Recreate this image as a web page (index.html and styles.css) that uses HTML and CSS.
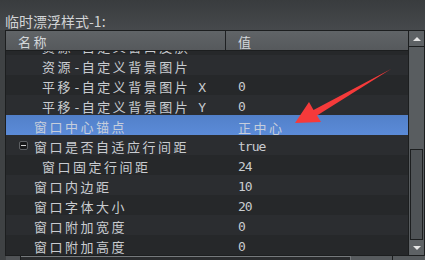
FILE: index.html
```html
<!DOCTYPE html>
<html lang="zh">
<head>
<meta charset="UTF-8" />
<title>临时漂浮样式</title>
<link rel="stylesheet" href="styles.css">
</head>
<body>
  <div class="title">临时漂浮样式-1:</div>

  <div class="panel">
    <div class="grid">
      <div class="head">
        <div class="hname">名称</div>
        <div class="hval">值</div>
      </div>
      <div class="rows">
        <div class="row dark cut"><div class="name child">资源<span class="dash">-</span>自定义窗口皮肤</div><div class="val">skin01</div></div>
        <div class="row"><div class="name child">资源<span class="dash">-</span>自定义背景图片</div><div class="val"></div></div>
        <div class="row dark"><div class="name child">平移<span class="dash">-</span>自定义背景图片<span class="axis"> X</span></div><div class="val">0</div></div>
        <div class="row"><div class="name child">平移<span class="dash">-</span>自定义背景图片<span class="axis"> Y</span></div><div class="val">0</div></div>
        <div class="row sel"><div class="name">窗口中心锚点</div><div class="val"><span class="cjk">正中心</span></div></div>
        <div class="row"><div class="name tree"><span class="toggle"></span>窗口是否自适应行间距</div><div class="val">true</div></div>
        <div class="row dark"><div class="name child">窗口固定行间距</div><div class="val">24</div></div>
        <div class="row"><div class="name">窗口内边距</div><div class="val">10</div></div>
        <div class="row dark"><div class="name">窗口字体大小</div><div class="val">20</div></div>
        <div class="row"><div class="name">窗口附加宽度</div><div class="val">0</div></div>
        <div class="row dark"><div class="name">窗口附加高度</div><div class="val">0</div></div>
      </div>
    </div>
    <div class="vscroll">
      <div class="sbtn up"></div>
      <div class="track"><div class="thumb"></div></div>
      <div class="sbtn down"></div>
    </div>
  </div>

  <div class="foot">
    <span class="f1"></span><span class="f2"></span><span class="f3"></span><span class="f4"></span><span class="f5"></span><span class="f6"></span>
  </div>

  <!-- red pointer drawn over the list -->
  <svg class="arrow" width="425" height="260" viewBox="0 0 425 260">
    <polygon points="295,123 309,102 313.5,110 391,69 317,115.5 321,122" fill="#f53a3a"/>
  </svg>
</body>
</html>
```

FILE: styles.css
```css
* { box-sizing: border-box; margin: 0; padding: 0; }
body {
  width: 425px; height: 260px; overflow: hidden; position: relative;
  background: #3f4244;
  font-family: "DejaVu Sans Mono", "Noto Sans CJK SC", monospace;
  color: #c9ccd0;
}

/* Title */
.title {
  height: 30px; padding: 13px 0 0 5px;
  font: 14px/16px "Noto Sans CJK SC", sans-serif;
  color: #d2d4d6;
  background: linear-gradient(#393c3e, #46494c);
}

/* Property grid */
.panel { display: flex; margin-left: 5px; }
.grid { width: 404px; border: 1px solid #1c1e1f; }

.head {
  display: flex; height: 20px;
  border-bottom: 1px solid #1c1e1f;
  background: linear-gradient(#606467, #56595c);
  color: #d4d7da;
  font-size: 13px; line-height: 14px; letter-spacing: 2.5px;
}
.hname { width: 220px; padding: 5px 0 0 12px; border-right: 1px solid #1e2022; }
.hval { flex: 1; padding: 5px 0 0 12px; }

.rows { height: 204px; overflow: hidden; }
.row { display: flex; height: 20px; background: #2b2d30; white-space: nowrap; }
.row.dark { background: #26282a; }
.row.cut { margin-top: -16px; }
.row.sel { background: linear-gradient(#5280c9, #5b8bd8); color: #c6cedc; }

.name {
  display: flex; width: 220px; padding: 6px 0 0 28px;
  font-size: 13px; line-height: 14px; letter-spacing: 2.5px;
}
.name.child { padding-left: 36px; }
.name.tree { padding-left: 13px; }
.dash { letter-spacing: 1px; }
.axis { letter-spacing: 0; white-space: pre; }

.toggle {
  position: relative; flex: none;
  width: 9px; height: 9px; margin-right: 6px;
  border: 1px solid #5d6063; border-radius: 2px;
  background: #18191a;
}
.toggle::after {
  content: ""; position: absolute; left: 1px; right: 1px; top: 3px;
  height: 1px; background: #d2d2d2;
}

.val {
  flex: 1; padding: 5px 0 0 12px;
  font-size: 13px; line-height: 14px; letter-spacing: -1px;
}
.val .cjk { letter-spacing: 2.5px; vertical-align: -2px; }

/* Scrollbar */
.vscroll {
  width: 16px; display: flex; flex-direction: column;
  border-right: 1px solid #1c1e1f;
}
.sbtn {
  display: flex; align-items: center; justify-content: center;
  background: #5e6265;
}
.sbtn.up { height: 17px; border-top: 1px solid #1c1e1f; border-bottom: 1px solid #1c1e1f; }
.sbtn.down { height: 16px; border-bottom: 1px solid #1c1e1f; }
.sbtn.up::before {
  content: ""; border-left: 4px solid transparent; border-right: 4px solid transparent;
  border-bottom: 4px solid #e6e6e6;
}
.sbtn.down::before {
  content: ""; border-left: 4px solid transparent; border-right: 4px solid transparent;
  border-top: 4px solid #e6e6e6;
}
.track {
  flex: 1; display: flex; flex-direction: column; justify-content: flex-end;
  background: #595d60;
}
.thumb { height: 91px; margin: 0 1px; border: 1px solid #1c1e1f; background: #4f5356; }

/* Cut-off strip below the grid */
.foot { display: flex; height: 4px; }
.foot span { display: block; height: 4px; }
.f1 { width: 6px; background: #3f4244; }
.f2 { width: 15px; background: #505356; border-right: 1px solid #1c1e1f; }
.f3 { width: 330px; background: #2a2c2e; border-top: 1px solid #75797c; border-right: 1px solid #75797c; }
.f4 { width: 41px; background: #575b5e; }
.f5 { width: 1px; background: #1c1e1f; }
.f6 { flex: 1; background: #575b5e; }

.arrow { position: absolute; top: 0; left: 0; pointer-events: none; }
```
